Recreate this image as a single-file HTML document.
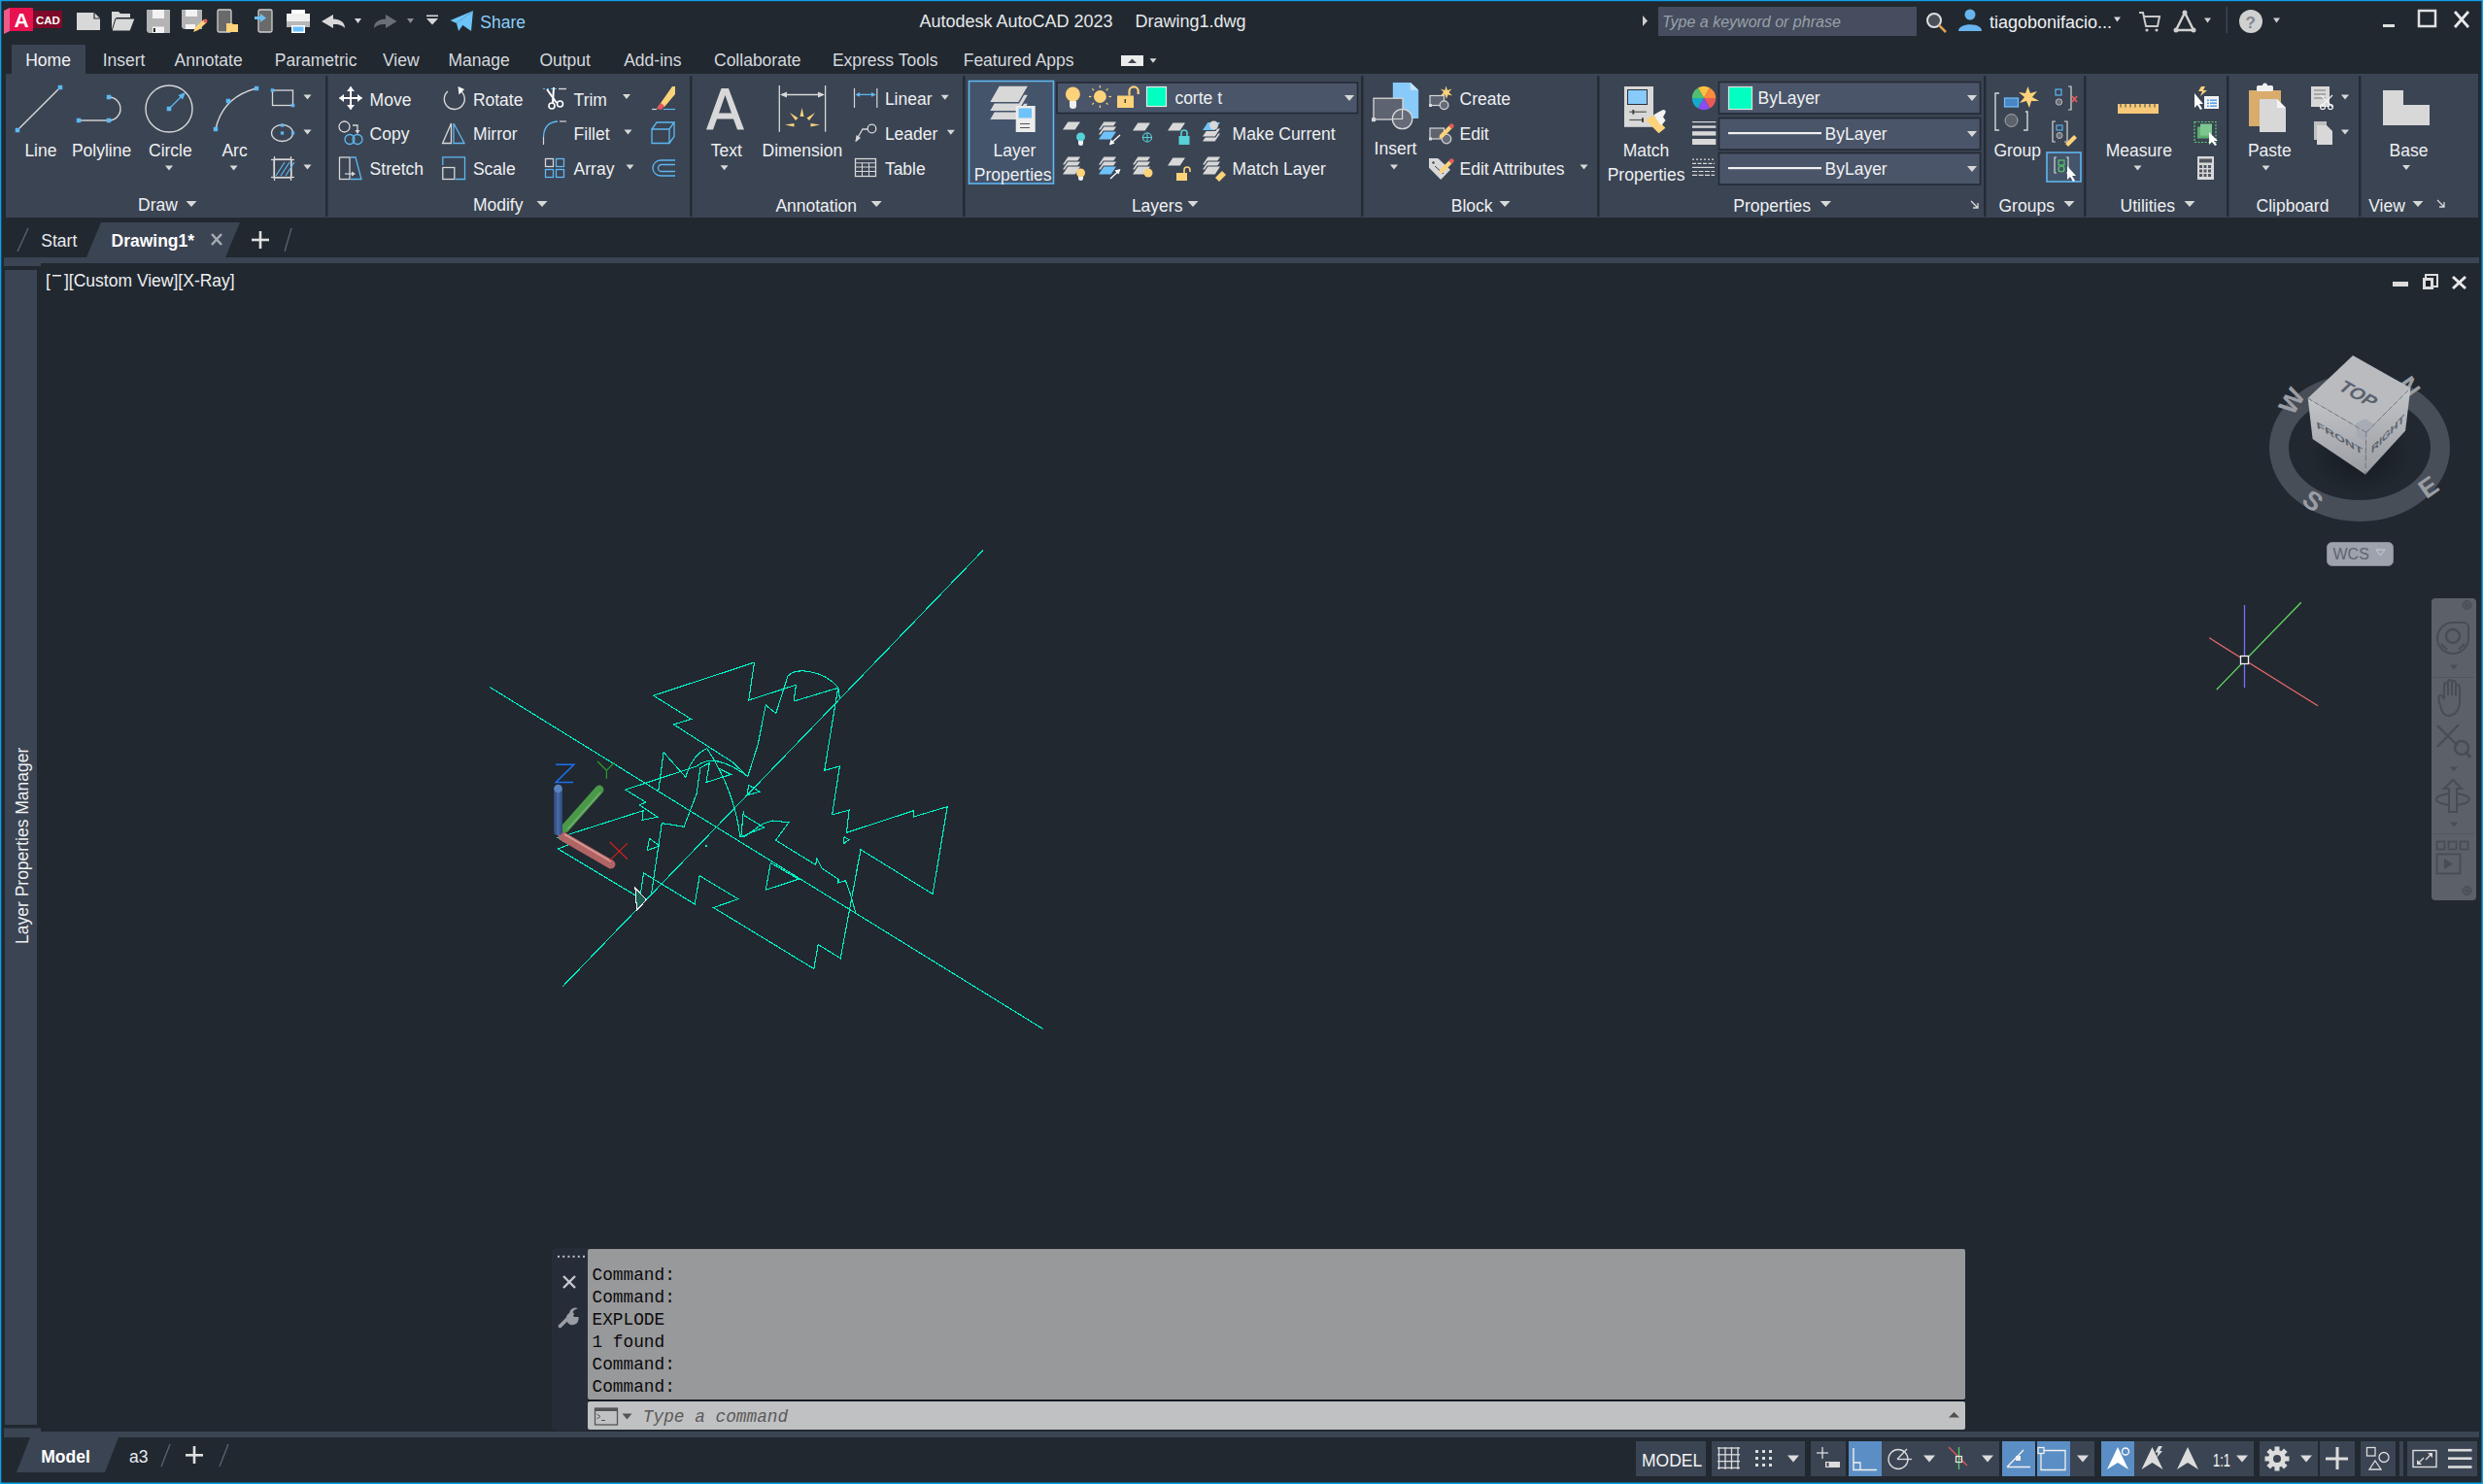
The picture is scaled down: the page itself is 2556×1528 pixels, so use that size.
<!DOCTYPE html>
<html><head><meta charset="utf-8"><style>
html,body{margin:0;padding:0;width:2556px;height:1528px;overflow:hidden;background:#212830;}
svg{position:absolute;left:0;top:0;display:block;}
text{font-family:"Liberation Sans",sans-serif;white-space:pre;}
</style></head><body>
<svg width="2556" height="1528" viewBox="0 0 2556 1528">
<rect x="0" y="0" width="2556" height="1528" fill="#212830" />
<rect x="0" y="0" width="2556" height="1.2" fill="#0ea0e8" />
<rect x="0" y="0" width="1.3" height="1528" fill="#0ea0e8" />
<rect x="2554.5" y="0" width="1.5" height="1528" fill="#0ea0e8" />
<rect x="0" y="1526.5" width="2556" height="1.5" fill="#0ea0e8" />
<polygon points="4,11 10,8 10,32 4,35" fill="#ee5a8a" />
<rect x="10" y="8" width="24" height="24" fill="#e8124f" />
<rect x="34" y="11" width="30" height="18" fill="#7d0a28" />
<text x="14.5" y="28" font-size="21" fill="#ffffff" font-weight="bold" >A</text>
<text x="37" y="25" font-size="11.5" fill="#ffffff" font-weight="bold" >CAD</text>
<text x="946.5" y="27.5" font-size="18" fill="#e6e8ea" >Autodesk AutoCAD 2023</text>
<text x="1168.5" y="27.5" font-size="18" fill="#e6e8ea" >Drawing1.dwg</text>
<polygon points="1691,16 1696,21.5 1691,27" fill="#d0d0d0" />
<rect x="1707" y="7" width="266" height="30" fill="#454d5e" />
<text x="1711" y="28" font-size="16" fill="#9aa0a8" font-style="italic" >Type a keyword or phrase</text>
<circle cx="1991" cy="21" r="7" fill="#4a5058" stroke="#e0e0e0" stroke-width="2" />
<line x1="1996" y1="26" x2="2003" y2="33" stroke="#e0a050" stroke-width="2.5" />
<circle cx="2028" cy="15" r="5.5" fill="#68b4ee" />
<path d="M2016,32 C2016,23 2040,23 2040,32 Z" fill="#68b4ee" />
<text x="2048" y="28.5" font-size="18" fill="#eef0f2" >tiagobonifacio...</text>
<polygon points="2176.0,17.5 2183.0,17.5 2179.5,22.5" fill="#d8d8d8" />
<polyline points="2202,13 2206,13 2209,27 2221,27 2223,17 2207,17" fill="none" stroke="#c8c8c8" stroke-width="2" />
<circle cx="2210" cy="31" r="1.6" fill="#c8c8c8" />
<circle cx="2220" cy="31" r="1.6" fill="#c8c8c8" />
<polygon points="2249,13 2240,31 2258,31" fill="none" stroke="#d0d0d0" stroke-width="2.5" stroke-linejoin="round"/>
<circle cx="2249" cy="13" r="2.5" fill="#d0d0d0" />
<circle cx="2240" cy="31" r="2.5" fill="#d0d0d0" />
<circle cx="2258" cy="31" r="2.5" fill="#d0d0d0" />
<polygon points="2269.0,18.5 2276.0,18.5 2272.5,23.5" fill="#d0d0d0" />
<rect x="2291.5" y="7" width="1.5" height="27" fill="#3b4453" />
<circle cx="2317" cy="22" r="12" fill="#d0d0d0" />
<text x="2311.5" y="29" font-size="17" fill="#808590" font-weight="bold" >?</text>
<polygon points="2340.0,18.5 2347.0,18.5 2343.5,23.5" fill="#d0d0d0" />
<rect x="2453" y="25" width="12" height="3" fill="#e0e0e0" />
<rect x="2490" y="11" width="17" height="16" fill="none" stroke="#e0e0e0" stroke-width="2.5"/>
<line x1="2527" y1="12" x2="2541" y2="28" stroke="#e8e8e8" stroke-width="2.8" />
<line x1="2541" y1="12" x2="2527" y2="28" stroke="#e8e8e8" stroke-width="2.8" />
<rect x="12" y="46" width="76" height="32" fill="#3b4453" />
<text x="26.2" y="68.2" font-size="17.5" fill="#f2f3f5" >Home</text>
<text x="105.7" y="68.2" font-size="17.5" fill="#d6d9de" >Insert</text>
<text x="179.6" y="68.2" font-size="17.5" fill="#d6d9de" >Annotate</text>
<text x="282.8" y="68.2" font-size="17.5" fill="#d6d9de" >Parametric</text>
<text x="394" y="68.2" font-size="17.5" fill="#d6d9de" >View</text>
<text x="461.5" y="68.2" font-size="17.5" fill="#d6d9de" >Manage</text>
<text x="555.4" y="68.2" font-size="17.5" fill="#d6d9de" >Output</text>
<text x="642.2" y="68.2" font-size="17.5" fill="#d6d9de" >Add-ins</text>
<text x="735" y="68.2" font-size="17.5" fill="#d6d9de" >Collaborate</text>
<text x="856.9" y="68.2" font-size="17.5" fill="#d6d9de" >Express Tools</text>
<text x="991.7" y="68.2" font-size="17.5" fill="#d6d9de" >Featured Apps</text>
<rect x="1154" y="57" width="23" height="11" fill="#ececec" />
<polygon points="1161,65 1170,65 1165.5,60.5" fill="#404650" />
<polygon points="1183.5,60.25 1190.5,60.25 1187,64.75" fill="#d8d8d8" />
<rect x="6" y="76" width="2545" height="148" fill="#3b4453" />
<rect x="335" y="78" width="2.5" height="145" fill="#252b35" />
<rect x="710" y="78" width="2.5" height="145" fill="#252b35" />
<rect x="991" y="78" width="2.5" height="145" fill="#252b35" />
<rect x="1401" y="78" width="2.5" height="145" fill="#252b35" />
<rect x="1644" y="78" width="2.5" height="145" fill="#252b35" />
<rect x="2042" y="78" width="2.5" height="145" fill="#252b35" />
<rect x="2145" y="78" width="2.5" height="145" fill="#252b35" />
<rect x="2292" y="78" width="2.5" height="145" fill="#252b35" />
<rect x="2428" y="78" width="2.5" height="145" fill="#252b35" />
<polygon points="104,229 247,229 232,265 89,265" fill="#3b4453" />
<line x1="29" y1="235" x2="18" y2="259" stroke="#5c6470" stroke-width="1.3" />
<text x="42.3" y="254" font-size="17.5" fill="#e8eaed" >Start</text>
<text x="114.5" y="254" font-size="17.5" fill="#ffffff" font-weight="bold" >Drawing1*</text>
<line x1="218" y1="241" x2="228" y2="252" stroke="#a8acb3" stroke-width="2.5" />
<line x1="228" y1="241" x2="218" y2="252" stroke="#a8acb3" stroke-width="2.5" />
<rect x="259" y="245.7" width="18" height="2.6" fill="#e0e0e0" />
<rect x="266.7" y="238" width="2.6" height="18" fill="#e0e0e0" />
<line x1="300" y1="235" x2="293" y2="259" stroke="#5c6470" stroke-width="1.3" />
<rect x="4" y="265" width="2548" height="6" fill="#3b4453" />
<rect x="4" y="271" width="38" height="3" fill="#3b4453" />
<text x="47" y="295" font-size="17.5" fill="#eef0f2" >[</text>
<rect x="54" y="283" width="9" height="1.5" fill="#eef0f2" />
<text x="66" y="295" font-size="17.5" fill="#eef0f2" >][Custom View][X-Ray]</text>
<rect x="2463" y="290" width="16" height="5" fill="#dcdcdc" />
<rect x="2497" y="283" width="12" height="12" fill="none" stroke="#dcdcdc" stroke-width="2"/>
<rect x="2494" y="286" width="11" height="12" fill="#dcdcdc" />
<rect x="2497" y="289" width="5" height="6" fill="#1a1f28" />
<line x1="2525" y1="285" x2="2538" y2="297" stroke="#e8e8e8" stroke-width="3" />
<line x1="2538" y1="285" x2="2525" y2="297" stroke="#e8e8e8" stroke-width="3" />
<rect x="5" y="278" width="33" height="1189" fill="#3b4453" />
<text x="0" y="0" font-size="17.5" fill="#eef0f2" transform="translate(28.8,972) rotate(-90)">Layer Properties Manager</text>
<rect x="4" y="1470.5" width="38" height="4" fill="#3b4453" />
<rect x="4" y="1474" width="2548" height="6" fill="#3b4453" />
<polygon points="31,1480 122,1480 108,1516 17,1516" fill="#3b4453" />
<text x="42.3" y="1505.7" font-size="17.5" fill="#ffffff" font-weight="bold" >Model</text>
<text x="133" y="1505.7" font-size="17.5" fill="#e8eaed" >a3</text>
<line x1="175" y1="1487" x2="166" y2="1510" stroke="#5c6470" stroke-width="1.3" />
<rect x="191" y="1497" width="18" height="2.6" fill="#e0e0e0" />
<rect x="198.7" y="1489" width="2.6" height="18" fill="#e0e0e0" />
<line x1="235" y1="1487" x2="226" y2="1510" stroke="#5c6470" stroke-width="1.3" />
<path d="M79,13 H97 L103,19 V31 H79 Z" fill="#d8d8d8" />
<path d="M97,13 V19 H103" fill="none" stroke="#2a2f38" stroke-width="1.2" />
<path d="M115,12 H122 L124,14 H134 V18 H120 L115,32 Z" fill="#d8d8d8" />
<polygon points="119,19 139,19 134,32 115,32" fill="#d8d8d8" stroke="#21272f" stroke-width="1"/>
<path d="M151,10 H175 V34 H153 L151,32 Z" fill="#b4b4b4" />
<rect x="157" y="10" width="12" height="9" fill="#f2f2f2" />
<rect x="157" y="27.5" width="12" height="6.5" fill="#f2f2f2" />
<rect x="158" y="29" width="1.8" height="4" fill="#111" />
<path d="M187,10 H208 V30 H189 L187,28 Z" fill="#b4b4b4" />
<rect x="191" y="10" width="12" height="7" fill="#f2f2f2" />
<rect x="191" y="25" width="10" height="5" fill="#f2f2f2" />
<path d="M199,33 L201,28 L210,20 L213,23 L204,31 Z" fill="#fcd27a" />
<circle cx="211.5" cy="21.5" r="2" fill="#e85a5a" />
<rect x="224" y="10" width="14" height="23" fill="#6a6a6a" rx="1.5" stroke="#d0d0d0" stroke-width="1.3"/>
<path d="M233,24 H239 L240,25 H245 V33 H233 Z" fill="#fcd27a" />
<rect x="266" y="10" width="14" height="23" fill="#6a6a6a" rx="1.5" stroke="#d0d0d0" stroke-width="1.3"/>
<path d="M262,17 H268 V14 L274,18.5 L268,23 V20 H262 Z" fill="#6cc0f8" />
<rect x="300" y="10" width="14" height="6" fill="#ffffff" />
<rect x="295" y="14" width="24" height="14" fill="#b8b8b8" />
<rect x="295" y="14" width="24" height="8" fill="#f0f0f0" />
<rect x="300" y="26" width="14" height="8" fill="#ffffff" />
<rect x="301.5" y="27.5" width="11" height="5" fill="#6cc0f8" />
<path d="M331,22 L343,15 V19.5 C350,19.5 355,23 355,29 C352,25.5 348,25 343,25 V29 Z" fill="#d8d8d8" />
<polygon points="365.0,19.0 372.0,19.0 368.5,24.0" fill="#d8d8d8" />
<path d="M408.5,22 L397,15 V19.5 C390,19.5 385,23 385,29 C388,25.5 392,25 397,25 V29 Z" fill="#6a6e76" />
<polygon points="419.0,19.0 426.0,19.0 422.5,24.0" fill="#8c8c8c" />
<rect x="439" y="15.5" width="12" height="1.6" fill="#d8d8d8" />
<polygon points="439,19 451,19 445,25.5" fill="#d8d8d8" />
<polygon points="463.5,21 487,11 470,24" fill="#6cc4f8" />
<polygon points="470,24 487,11 472,32" fill="#6cc4f8" />
<polygon points="475,25 487,11 485,32" fill="#6cc4f8" />
<text x="494.3" y="28.5" font-size="17.5" fill="#8ccff8" >Share</text>
<line x1="20" y1="132" x2="60" y2="92" stroke="#d8d8d8" stroke-width="1.4" />
<rect x="15.75" y="131.75" width="4.5" height="4.5" fill="#5cb8f2" />
<rect x="59.75" y="87.75" width="4.5" height="4.5" fill="#5cb8f2" />
<line x1="81" y1="124" x2="112" y2="124" stroke="#d8d8d8" stroke-width="1.4" />
<path d="M112,100 A12,12 0 0 1 112,124" fill="none" stroke="#d8d8d8" stroke-width="1.4" />
<rect x="78.75" y="121.75" width="4.5" height="4.5" fill="#5cb8f2" />
<rect x="109.75" y="121.75" width="4.5" height="4.5" fill="#5cb8f2" />
<rect x="109.75" y="97.75" width="4.5" height="4.5" fill="#5cb8f2" />
<circle cx="174" cy="112" r="24" fill="none" stroke="#d8d8d8" stroke-width="1.4" />
<line x1="174" y1="112" x2="188" y2="98" stroke="#5cb8f2" stroke-width="1.3" />
<polygon points="191,95 183.5,98 188,102.5" fill="#5cb8f2" />
<rect x="171.75" y="109.75" width="4.5" height="4.5" fill="#5cb8f2" />
<path d="M222,133 Q229,100 264,91" fill="none" stroke="#d8d8d8" stroke-width="1.4" />
<rect x="219.75" y="130.75" width="4.5" height="4.5" fill="#5cb8f2" />
<rect x="232.75" y="101.75" width="4.5" height="4.5" fill="#5cb8f2" />
<rect x="261.75" y="88.75" width="4.5" height="4.5" fill="#5cb8f2" />
<rect x="280.5" y="93" width="21" height="15.5" fill="none" stroke="#d8d8d8" stroke-width="1.3"/>
<rect x="278.75" y="91.25" width="3.5" height="3.5" fill="#5cb8f2" />
<rect x="299.75" y="106.75" width="3.5" height="3.5" fill="#5cb8f2" />
<polygon points="312.5,97.5 320.5,97.5 316.5,102.5" fill="#d8d8d8" />
<ellipse cx="290.5" cy="137" rx="11" ry="8.5" fill="none" stroke="#d8d8d8" stroke-width="1.3"/>
<rect x="288.85" y="135.35" width="3.3" height="3.3" fill="#5cb8f2" />
<rect x="288.85" y="127.35" width="3.3" height="3.3" fill="#5cb8f2" />
<rect x="299.85" y="135.35" width="3.3" height="3.3" fill="#5cb8f2" />
<polygon points="312.5,133.5 320.5,133.5 316.5,138.5" fill="#d8d8d8" />
<rect x="282" y="164" width="18" height="19" fill="none" stroke="#d8d8d8" stroke-width="1.3"/>
<line x1="279" y1="164.5" x2="303" y2="164.5" stroke="#d8d8d8" stroke-width="1.2" />
<line x1="279" y1="182.5" x2="303" y2="182.5" stroke="#d8d8d8" stroke-width="1.2" />
<line x1="282.5" y1="161" x2="282.5" y2="186" stroke="#d8d8d8" stroke-width="1.2" />
<line x1="299.5" y1="161" x2="299.5" y2="186" stroke="#d8d8d8" stroke-width="1.2" />
<line x1="284" y1="181" x2="293" y2="167" stroke="#5cb8f2" stroke-width="1.2" />
<line x1="289" y1="181" x2="298" y2="167" stroke="#5cb8f2" stroke-width="1.2" />
<line x1="294" y1="181" x2="303" y2="167" stroke="#5cb8f2" stroke-width="1.2" />
<polygon points="312.5,169.5 320.5,169.5 316.5,174.5" fill="#d8d8d8" />
<text x="25.4" y="161.3" font-size="17.5" fill="#eef0f2" >Line</text>
<text x="73.9" y="161.3" font-size="17.5" fill="#eef0f2" >Polyline</text>
<text x="153" y="161.3" font-size="17.5" fill="#eef0f2" >Circle</text>
<text x="228.4" y="161.3" font-size="17.5" fill="#eef0f2" >Arc</text>
<polygon points="170.0,170.5 178.0,170.5 174,175.5" fill="#d8d8d8" />
<polygon points="236.6,170.5 244.6,170.5 240.6,175.5" fill="#d8d8d8" />
<text x="142" y="217" font-size="17.5" fill="#eef0f2" >Draw</text>
<polygon points="191.5,207.0 202.5,207.0 197,213.0" fill="#d8d8d8" />
<line x1="349.5" y1="101" x2="372.5" y2="101" stroke="#ffffff" stroke-width="2" />
<line x1="361" y1="89.5" x2="361" y2="112.5" stroke="#ffffff" stroke-width="2" />
<polygon points="349,101 354,97 354,105" fill="#fff" />
<polygon points="373,101 368,97 368,105" fill="#fff" />
<polygon points="361,89 357,94 365,94" fill="#fff" />
<polygon points="361,113 357,108 365,108" fill="#fff" />
<text x="380.6" y="108.5" font-size="17.5" fill="#eef0f2" >Move</text>
<path d="M474,93.5 A10.5,10.5 0 1 1 461,94" fill="none" stroke="#d8d8d8" stroke-width="1.4" />
<polygon points="471.5,89 478,92 472.5,97.5" fill="#fff" />
<text x="486.9" y="108.5" font-size="17.5" fill="#eef0f2" >Rotate</text>
<line x1="559" y1="91.5" x2="583" y2="91.5" stroke="#5cb8f2" stroke-width="1.2" stroke-dasharray="2,2"/>
<rect x="575" y="90.8" width="8" height="1.4" fill="#d8d8d8" />
<line x1="563" y1="92" x2="573" y2="106" stroke="#fff" stroke-width="2" />
<line x1="570" y1="90" x2="569" y2="106" stroke="#fff" stroke-width="2" />
<circle cx="568" cy="109" r="3" fill="none" stroke="#fff" stroke-width="1.6" />
<circle cx="576.5" cy="107" r="3" fill="none" stroke="#fff" stroke-width="1.6" />
<text x="590.6" y="108.5" font-size="17.5" fill="#eef0f2" >Trim</text>
<polygon points="641.0,97.0 649.0,97.0 645,102.0" fill="#d8d8d8" />
<path d="M676,112 L692,89 L695,89 L695,97 L684,110 Z" fill="#fcd27a" />
<path d="M676,112 L680,106 L684,109 L681,113 Z" fill="#e8545a" />
<line x1="671" y1="112.5" x2="676" y2="112.5" stroke="#d8d8d8" stroke-width="1.2" />
<line x1="683" y1="112.5" x2="695" y2="112.5" stroke="#5cb8f2" stroke-width="1.2" />
<circle cx="354.5" cy="130.5" r="5.5" fill="none" stroke="#d8d8d8" stroke-width="1.3" />
<path d="M363,129 H368 V135" fill="none" stroke="#d8d8d8" stroke-width="1.3" />
<polygon points="365.5,134 370.5,134 368,138" fill="#d8d8d8" />
<circle cx="360" cy="143.5" r="5" fill="none" stroke="#5cb8f2" stroke-width="1.3" />
<circle cx="368" cy="143.5" r="5" fill="none" stroke="#5cb8f2" stroke-width="1.3" />
<text x="380.6" y="144.3" font-size="17.5" fill="#eef0f2" >Copy</text>
<polygon points="455.6,147.5 464.5,127 464.5,147.5" fill="none" stroke="#d8d8d8" stroke-width="1.3"/>
<polygon points="467,127 478,147.5 467,147.5" fill="none" stroke="#5cb8f2" stroke-width="1.3"/>
<text x="486.9" y="144.3" font-size="17.5" fill="#eef0f2" >Mirror</text>
<line x1="559.5" y1="141" x2="559.5" y2="149" stroke="#d8d8d8" stroke-width="1.2" />
<path d="M559.5,141 Q560,126 574,125" fill="none" stroke="#5cb8f2" stroke-width="1.3" />
<line x1="576" y1="125" x2="583" y2="125" stroke="#d8d8d8" stroke-width="1.2" />
<text x="590.6" y="144.3" font-size="17.5" fill="#eef0f2" >Fillet</text>
<polygon points="642.5,133.5 650.5,133.5 646.5,138.5" fill="#d8d8d8" />
<path d="M671,133 H689 V147.5 H671 Z M671,133 L676,126 H694 L689,133 M694,126 V140.5 L689,147.5" fill="none" stroke="#5cb8f2" stroke-width="1.3" />
<rect x="349.5" y="162" width="10.5" height="22.5" fill="none" stroke="#d8d8d8" stroke-width="1.3"/>
<path d="M361,162 H366 L372,184.5 H361" fill="none" stroke="#5cb8f2" stroke-width="1.3" />
<line x1="355" y1="179" x2="364" y2="179" stroke="#d8d8d8" stroke-width="1.2" />
<polygon points="366,179 362,176.5 362,181.5" fill="#d8d8d8" />
<text x="380.6" y="179.9" font-size="17.5" fill="#eef0f2" >Stretch</text>
<path d="M455.8,170 V161.8 H478.5 V184.5 H469" fill="none" stroke="#5cb8f2" stroke-width="1.3" />
<rect x="455.8" y="172.5" width="12" height="12" fill="none" stroke="#d8d8d8" stroke-width="1.3"/>
<text x="486.9" y="179.9" font-size="17.5" fill="#eef0f2" >Scale</text>
<rect x="561.5" y="163.5" width="8" height="8" fill="none" stroke="#d8d8d8" stroke-width="1.3"/>
<rect x="572.5" y="163.5" width="8" height="8" fill="none" stroke="#5cb8f2" stroke-width="1.3"/>
<rect x="561.5" y="174.5" width="8" height="8" fill="none" stroke="#5cb8f2" stroke-width="1.3"/>
<rect x="572.5" y="174.5" width="8" height="8" fill="none" stroke="#5cb8f2" stroke-width="1.3"/>
<text x="590.6" y="179.9" font-size="17.5" fill="#eef0f2" >Array</text>
<polygon points="644.5,169.5 652.5,169.5 648.5,174.5" fill="#d8d8d8" />
<path d="M695,165 H680 A8,8 0 0 0 680,181 H695" fill="none" stroke="#5cb8f2" stroke-width="1.3" />
<path d="M695,169.5 H681 A3.5,3.5 0 0 0 681,176.5 H695" fill="none" stroke="#5cb8f2" stroke-width="1.3" />
<text x="486.9" y="217" font-size="17.5" fill="#eef0f2" >Modify</text>
<polygon points="552.5,207.0 563.5,207.0 558,213.0" fill="#d8d8d8" />
<path d="M727,133.5 L742.5,91 H750 L766,133.5 H759 L755,122.5 H738 L734,133.5 Z M740,116.5 H753 L746.5,98 Z" fill="#d8d8d8" />
<text x="731.7" y="160.6" font-size="17.5" fill="#eef0f2" >Text</text>
<polygon points="741.6,170.3 749.6,170.3 745.6,175.3" fill="#d8d8d8" />
<line x1="802.3" y1="88" x2="802.3" y2="135.7" stroke="#d8d8d8" stroke-width="1.3" />
<line x1="849.6" y1="88" x2="849.6" y2="135.7" stroke="#d8d8d8" stroke-width="1.3" />
<line x1="805" y1="97.5" x2="847" y2="97.5" stroke="#d8d8d8" stroke-width="1.3" />
<polygon points="803,97.5 810,94.5 810,100.5" fill="#d8d8d8" />
<polygon points="849,97.5 842,94.5 842,100.5" fill="#d8d8d8" />
<polygon points="825.5,111 823.5,120 827.5,120" fill="#fcd27a" />
<polygon points="813,116 819,124 821.5,121.5" fill="#fcd27a" />
<polygon points="839,116 833,124 830.5,121.5" fill="#fcd27a" />
<polygon points="808,128.5 817.5,127 817.5,130.5" fill="#fcd27a" />
<polygon points="844,128.5 834.5,127 834.5,130.5" fill="#fcd27a" />
<text x="784.5" y="160.6" font-size="17.5" fill="#eef0f2" >Dimension</text>
<line x1="879.5" y1="91" x2="879.5" y2="111" stroke="#d8d8d8" stroke-width="1.2" />
<line x1="902.8" y1="91" x2="902.8" y2="111" stroke="#d8d8d8" stroke-width="1.2" />
<line x1="882" y1="97.4" x2="900" y2="97.4" stroke="#5cb8f2" stroke-width="1.3" />
<polygon points="880.5,97.4 885,95 885,99.8" fill="#5cb8f2" />
<polygon points="901.8,97.4 897,95 897,99.8" fill="#5cb8f2" />
<text x="910.9" y="107.8" font-size="17.5" fill="#eef0f2" >Linear</text>
<polygon points="968.7,97.8 976.7,97.8 972.7,102.8" fill="#d8d8d8" />
<path d="M881,145 L888,133 H893" fill="none" stroke="#d8d8d8" stroke-width="1.3" />
<circle cx="897.5" cy="132.5" r="4.3" fill="none" stroke="#d8d8d8" stroke-width="1.3" />
<polygon points="880.5,146.5 881.5,139 886,142" fill="#d8d8d8" />
<text x="910.9" y="143.6" font-size="17.5" fill="#eef0f2" >Leader</text>
<polygon points="974.8,133.8 982.8,133.8 978.8,138.8" fill="#d8d8d8" />
<rect x="880.5" y="163.5" width="21" height="18" fill="none" stroke="#d8d8d8" stroke-width="1.3"/>
<line x1="880.5" y1="167.8" x2="901.5" y2="167.8" stroke="#d8d8d8" stroke-width="1" />
<line x1="880.5" y1="172" x2="901.5" y2="172" stroke="#d8d8d8" stroke-width="1" />
<line x1="880.5" y1="176.5" x2="901.5" y2="176.5" stroke="#d8d8d8" stroke-width="1" />
<line x1="887.5" y1="167.8" x2="887.5" y2="181.5" stroke="#d8d8d8" stroke-width="1" />
<line x1="894.5" y1="167.8" x2="894.5" y2="181.5" stroke="#d8d8d8" stroke-width="1" />
<text x="910.9" y="179.7" font-size="17.5" fill="#eef0f2" >Table</text>
<text x="798.4" y="218" font-size="17.5" fill="#eef0f2" >Annotation</text>
<polygon points="896.7,207.0 907.7,207.0 902.2,213.0" fill="#d8d8d8" />
<rect x="997.5" y="83.5" width="87" height="105.5" fill="#44546a" stroke="#5fb6f0" stroke-width="1.6"/>
<polygon points="1018,123.8 1028.3,106 1059,106 1048.7,123.8" fill="#d8d8d8" stroke="#44546a" stroke-width="1.4"/>
<polygon points="1018,114.8 1028.3,97 1059,97 1048.7,114.8" fill="#d8d8d8" stroke="#44546a" stroke-width="1.4"/>
<polygon points="1018,105.8 1028.3,88 1059,88 1048.7,105.8" fill="#d8d8d8" stroke="#44546a" stroke-width="1.4"/>
<rect x="1045.7" y="109" width="20" height="27" fill="#ececec" />
<rect x="1048.5" y="111.5" width="13.5" height="10" fill="#6ec2fa" />
<line x1="1050" y1="127.5" x2="1060" y2="127.5" stroke="#555" stroke-width="1" />
<line x1="1050" y1="131.5" x2="1060" y2="131.5" stroke="#555" stroke-width="1" />
<text x="1022.5" y="160.9" font-size="17.5" fill="#eef0f2" >Layer</text>
<text x="1002.8" y="185.6" font-size="17.5" fill="#eef0f2" >Properties</text>
<rect x="1088" y="85" width="309.5" height="31.5" fill="#4a5569" stroke="#242a34" stroke-width="1.6"/>
<circle cx="1104.4" cy="97" r="7.5" fill="#fcd27a" />
<path d="M1101,104 H1108 V109 A3.5,3 0 0 1 1101,109 Z" fill="#f0f0f0" />
<circle cx="1132.4" cy="99.5" r="6.5" fill="#fcd27a" />
<line x1="1141.4" y1="99.5" x2="1143.9" y2="99.5" stroke="#fcd27a" stroke-width="1.3"/>
<line x1="1138.8" y1="105.9" x2="1140.5" y2="107.6" stroke="#fcd27a" stroke-width="1.3"/>
<line x1="1132.4" y1="108.5" x2="1132.4" y2="111.0" stroke="#fcd27a" stroke-width="1.3"/>
<line x1="1126.0" y1="105.9" x2="1124.3" y2="107.6" stroke="#fcd27a" stroke-width="1.3"/>
<line x1="1123.4" y1="99.5" x2="1120.9" y2="99.5" stroke="#fcd27a" stroke-width="1.3"/>
<line x1="1126.0" y1="93.1" x2="1124.3" y2="91.4" stroke="#fcd27a" stroke-width="1.3"/>
<line x1="1132.4" y1="90.5" x2="1132.4" y2="88.0" stroke="#fcd27a" stroke-width="1.3"/>
<line x1="1138.8" y1="93.1" x2="1140.5" y2="91.4" stroke="#fcd27a" stroke-width="1.3"/>
<rect x="1150" y="98.5" width="17" height="12.5" fill="#fcd27a" />
<path d="M1162.5,98.5 V94 A4.6,4.6 0 0 1 1171.7,94 V97" fill="none" stroke="#fcd27a" stroke-width="2.2" />
<rect x="1157.5" y="102" width="1.5" height="4" fill="#3b4453" />
<rect x="1180.5" y="89.5" width="20" height="20" fill="#00ffc0" stroke="#e8e8e8" stroke-width="1.2"/>
<text x="1209.4" y="107.2" font-size="17.5" fill="#eef0f2" >corte t</text>
<polygon points="1384.0,98.0 1394.0,98.0 1389,104.0" fill="#d8d8d8" />
<polygon points="1093,134 1099,125 1113,125 1107,134" fill="#d8d8d8" stroke="#3b4453" stroke-width="1.2"/>
<circle cx="1112.5" cy="141" r="4.5" fill="#58d0d8" />
<path d="M1110,145 H1115 V148 A2.5,2 0 0 1 1110,148 Z" fill="#f0f0f0" />
<polygon points="1130,134 1136,125 1150,125 1144,134" fill="#d8d8d8" stroke="#3b4453" stroke-width="1.2"/>
<polygon points="1130,139 1136,130 1150,130 1144,139" fill="#d8d8d8" stroke="#3b4453" stroke-width="1.2"/>
<polygon points="1130,144 1136,135 1150,135 1144,144" fill="#6ec2fa" stroke="#3b4453" stroke-width="1.2"/>
<line x1="1153" y1="139" x2="1143" y2="148" stroke="#fff" stroke-width="1.3" />
<polygon points="1142,149.5 1143.5,143.5 1147.5,147.5" fill="#fff" />
<polygon points="1165,135 1171,126 1185,126 1179,135" fill="#d8d8d8" stroke="#3b4453" stroke-width="1.2"/>
<circle cx="1181" cy="141.5" r="4.5" fill="none" stroke="#58d0d8" stroke-width="1.2" />
<line x1="1176" y1="141.5" x2="1186" y2="141.5" stroke="#58d0d8" stroke-width="1" />
<line x1="1181" y1="136.5" x2="1181" y2="146.5" stroke="#58d0d8" stroke-width="1" />
<polygon points="1201,135 1207,126 1221,126 1215,135" fill="#d8d8d8" stroke="#3b4453" stroke-width="1.2"/>
<rect x="1213.5" y="140" width="11" height="9" fill="#58d0d8" />
<path d="M1216,140 V137 A3,3 0 0 1 1222,137 V140" fill="none" stroke="#58d0d8" stroke-width="1.6" />
<polygon points="1237,146 1243,137 1257,137 1251,146" fill="#d8d8d8" stroke="#3b4453" stroke-width="1.2"/>
<polygon points="1237,141 1243,132 1257,132 1251,141" fill="#d8d8d8" stroke="#3b4453" stroke-width="1.2"/>
<polygon points="1237,134.5 1243,125.5 1257,125.5 1251,134.5" fill="#6ec2fa" stroke="#3b4453" stroke-width="1.2"/>
<circle cx="1249.5" cy="129" r="4.5" fill="#d8d8d8" />
<text x="1268.6" y="144.1" font-size="17.5" fill="#eef0f2" >Make Current</text>
<polygon points="1093,170 1099,161 1113,161 1107,170" fill="#d8d8d8" stroke="#3b4453" stroke-width="1.2"/>
<polygon points="1093,175 1099,166 1113,166 1107,175" fill="#d8d8d8" stroke="#3b4453" stroke-width="1.2"/>
<polygon points="1093,180 1099,171 1113,171 1107,180" fill="#d8d8d8" stroke="#3b4453" stroke-width="1.2"/>
<circle cx="1112.5" cy="178" r="4.5" fill="#fcd27a" />
<path d="M1110,182 H1115 V184 A2.5,2 0 0 1 1110,184 Z" fill="#f0f0f0" />
<polygon points="1130,170 1136,161 1150,161 1144,170" fill="#d8d8d8" stroke="#3b4453" stroke-width="1.2"/>
<polygon points="1130,175 1136,166 1150,166 1144,175" fill="#d8d8d8" stroke="#3b4453" stroke-width="1.2"/>
<polygon points="1130,180 1136,171 1150,171 1144,180" fill="#6ec2fa" stroke="#3b4453" stroke-width="1.2"/>
<line x1="1143" y1="184" x2="1152.5" y2="175" stroke="#fff" stroke-width="1.3" />
<polygon points="1153.5,174 1147.5,175.5 1151.5,179.5" fill="#fff" />
<polygon points="1165,170 1171,161 1185,161 1179,170" fill="#d8d8d8" stroke="#3b4453" stroke-width="1.2"/>
<polygon points="1165,175 1171,166 1185,166 1179,175" fill="#d8d8d8" stroke="#3b4453" stroke-width="1.2"/>
<polygon points="1165,180 1171,171 1185,171 1179,180" fill="#d8d8d8" stroke="#3b4453" stroke-width="1.2"/>
<circle cx="1182" cy="178" r="4.5" fill="#fcd27a" />
<polygon points="1201,171 1207,162 1221,162 1215,171" fill="#d8d8d8" stroke="#3b4453" stroke-width="1.2"/>
<rect x="1211" y="178" width="11" height="8" fill="#fcd27a" />
<path d="M1219,178 V175 A3,3 0 0 1 1225,175 V177" fill="none" stroke="#fcd27a" stroke-width="1.6" />
<polygon points="1237,170 1243,161 1257,161 1251,170" fill="#d8d8d8" stroke="#3b4453" stroke-width="1.2"/>
<polygon points="1237,175 1243,166 1257,166 1251,175" fill="#d8d8d8" stroke="#3b4453" stroke-width="1.2"/>
<polygon points="1237,180 1243,171 1257,171 1251,180" fill="#d8d8d8" stroke="#3b4453" stroke-width="1.2"/>
<path d="M1251,183 L1258,176 L1262,180 L1255,187 Z" fill="#fcd27a" />
<text x="1268.6" y="179.8" font-size="17.5" fill="#eef0f2" >Match Layer</text>
<text x="1164.9" y="217.7" font-size="17.5" fill="#eef0f2" >Layers</text>
<polygon points="1222.5,207.0 1233.5,207.0 1228,213.0" fill="#d8d8d8" />
<path d="M1433.8,84.9 H1451.9 L1460.2,92.7 V122 H1433.8 Z" fill="#88cafa" />
<polygon points="1451.9,84.9 1451.9,92.7 1460.2,92.7" fill="#c4e4fc" />
<rect x="1414" y="101.2" width="30" height="21.8" fill="#5d6370" stroke="#d8d8d8" stroke-width="1.3"/>
<circle cx="1443.6" cy="122.5" r="10.2" fill="#656b78" stroke="#d8d8d8" stroke-width="1.3" />
<path d="M1433.4,122.5 H1443.6 V112.3" fill="none" stroke="#d8d8d8" stroke-width="1.2" />
<rect x="1412" y="121.2" width="4" height="4" fill="#d8d8d8" />
<text x="1414.6" y="158.9" font-size="17.5" fill="#eef0f2" >Insert</text>
<polygon points="1431.0,169.5 1439.0,169.5 1435,174.5" fill="#d8d8d8" />
<rect x="1472" y="98.5" width="14.5" height="10" fill="#5d6370" stroke="#d8d8d8" stroke-width="1.2"/>
<circle cx="1486.6" cy="108.3" r="4.4" fill="#656b78" stroke="#d8d8d8" stroke-width="1.2" />
<rect x="1471" y="107" width="3" height="3" fill="#d8d8d8" />
<polygon points="1488.6,88.5 1490,93 1494.5,91.5 1491.5,95 1495,98.5 1490.5,97.5 1489,102 1487.5,97.5 1483,98.5 1486,95 1483,91.5 1487.3,93" fill="#fcd27a" />
<text x="1502.5" y="107.9" font-size="17.5" fill="#eef0f2" >Create</text>
<rect x="1472" y="132" width="14.5" height="11" fill="#5d6370" stroke="#d8d8d8" stroke-width="1.2"/>
<circle cx="1489" cy="143" r="4.8" fill="#656b78" stroke="#d8d8d8" stroke-width="1.2" />
<rect x="1471" y="141.5" width="3" height="3" fill="#d8d8d8" />
<path d="M1482,139 L1491.5,129.5 L1494.5,132.5 L1485,142 L1481.5,142.5 Z" fill="#fcd27a" />
<path d="M1491.5,129.5 L1492.5,128 A2,2 0 0 1 1496,131.5 L1494.5,132.5 Z" fill="#e85a5a" />
<text x="1502.5" y="144.1" font-size="17.5" fill="#eef0f2" >Edit</text>
<polygon points="1471,163.1 1480.2,163.1 1493,174.8 1483.2,185 1471,172.8" fill="#d8d8d8" />
<circle cx="1475.5" cy="167.5" r="1.2" fill="#3b4453" />
<line x1="1477" y1="171" x2="1486" y2="179" stroke="#3b4453" stroke-width="1" />
<path d="M1482,175 L1491.5,165.5 L1494.5,168.5 L1485,178 L1481.5,178.5 Z" fill="#fcd27a" />
<path d="M1491.5,165.5 L1492.5,164 A2,2 0 0 1 1496,167.5 L1494.5,168.5 Z" fill="#e85a5a" />
<text x="1502.5" y="179.8" font-size="17.5" fill="#eef0f2" >Edit Attributes</text>
<polygon points="1626.5,169.5 1634.5,169.5 1630.5,174.5" fill="#d8d8d8" />
<text x="1493.8" y="217.7" font-size="17.5" fill="#eef0f2" >Block</text>
<polygon points="1543.5,207.0 1554.5,207.0 1549,213.0" fill="#d8d8d8" />
<rect x="1672" y="89" width="30" height="41.8" fill="#d8d8d8" />
<rect x="1675.5" y="92.5" width="20" height="15" fill="#88cafa" stroke="#2a2f38" stroke-width="1"/>
<line x1="1677.3" y1="115.2" x2="1694.8" y2="115.2" stroke="#555" stroke-width="1.2" />
<rect x="1680.3" y="113" width="2" height="4.6" fill="#444" />
<line x1="1677.3" y1="123.5" x2="1692" y2="123.5" stroke="#555" stroke-width="1.2" />
<rect x="1690" y="121.3" width="2" height="4.6" fill="#444" />
<polygon points="1693.9,123.5 1701.7,118.6 1714.4,131.8 1707.5,137.2" fill="#fcd27a" />
<path d="M1702,118.5 L1707,115.5 L1711.5,113.2 A2.2,2.2 0 0 1 1714.5,116 L1712,120.5 L1714.5,124 L1710,129.5 Z" fill="#f2f2f2" />
<text x="1670.7" y="160.9" font-size="17.5" fill="#eef0f2" >Match</text>
<text x="1654.7" y="185.6" font-size="17.5" fill="#eef0f2" >Properties</text>
<path d="M1754,101 L1747.90,90.43 A12.2,12.2 0 0 1 1760.10,90.43 Z" fill="#fcc040"/>
<path d="M1754,101 L1760.10,90.43 A12.2,12.2 0 0 1 1766.20,101.00 Z" fill="#fb8c3c"/>
<path d="M1754,101 L1766.20,101.00 A12.2,12.2 0 0 1 1760.10,111.57 Z" fill="#e85a5a"/>
<path d="M1754,101 L1760.10,111.57 A12.2,12.2 0 0 1 1747.90,111.57 Z" fill="#8a4cf0"/>
<path d="M1754,101 L1747.90,111.57 A12.2,12.2 0 0 1 1741.80,101.00 Z" fill="#18a8c8"/>
<path d="M1754,101 L1741.80,101.00 A12.2,12.2 0 0 1 1747.90,90.43 Z" fill="#50c070"/>
<rect x="1742" y="125" width="24.3" height="1.2" fill="#d8d8d8" />
<rect x="1742" y="129.4" width="24.3" height="2.4" fill="#d8d8d8" />
<rect x="1742" y="135.2" width="24.3" height="4.4" fill="#d8d8d8" />
<rect x="1742" y="143" width="24.3" height="6" fill="#d8d8d8" />
<line x1="1742" y1="164.2" x2="1765" y2="164.2" stroke="#d8d8d8" stroke-width="1.2" stroke-dasharray="2,2"/>
<line x1="1742" y1="168.4" x2="1765" y2="168.4" stroke="#d8d8d8" stroke-width="1.2" stroke-dasharray="4,1.5"/>
<line x1="1742" y1="172.4" x2="1765" y2="172.4" stroke="#d8d8d8" stroke-width="1.2" stroke-dasharray="24"/>
<line x1="1742" y1="176.5" x2="1765" y2="176.5" stroke="#d8d8d8" stroke-width="1.2" stroke-dasharray="5,1.5"/>
<line x1="1742" y1="180.4" x2="1765" y2="180.4" stroke="#d8d8d8" stroke-width="1.2" stroke-dasharray="5,1.5"/>
<rect x="1769.5" y="84.5" width="269" height="32.5" fill="#4a5569" stroke="#242a34" stroke-width="1.6"/>
<polygon points="2025.0,98.0 2035.0,98.0 2030,104.0" fill="#d8d8d8" />
<rect x="1769.5" y="121.5" width="269" height="32.5" fill="#4a5569" stroke="#242a34" stroke-width="1.6"/>
<polygon points="2025.0,135.0 2035.0,135.0 2030,141.0" fill="#d8d8d8" />
<rect x="1769.5" y="157.5" width="269" height="32.5" fill="#4a5569" stroke="#242a34" stroke-width="1.6"/>
<polygon points="2025.0,171.0 2035.0,171.0 2030,177.0" fill="#d8d8d8" />
<rect x="1779.5" y="89.5" width="24" height="23" fill="#00ffc0" stroke="#e0e0e0" stroke-width="1.2"/>
<text x="1809.5" y="107.3" font-size="17.5" fill="#eef0f2" >ByLayer</text>
<rect x="1779" y="136" width="96" height="2.2" fill="#f0f0f0" />
<text x="1878.5" y="144.1" font-size="17.5" fill="#eef0f2" >ByLayer</text>
<rect x="1779" y="172" width="96" height="2.2" fill="#f0f0f0" />
<text x="1878.5" y="179.8" font-size="17.5" fill="#eef0f2" >ByLayer</text>
<text x="1784.3" y="217.7" font-size="17.5" fill="#eef0f2" >Properties</text>
<polygon points="1874.0,207.0 1885.0,207.0 1879.5,213.0" fill="#d8d8d8" />
<path d="M2029,207 L2036,214 M2036,209 V214 H2031" fill="none" stroke="#d8d8d8" stroke-width="1.3" />
<path d="M2058,96 H2054 V134 H2058 M2085,115 H2087 V134 H2083" fill="none" stroke="#d8d8d8" stroke-width="1.4" />
<rect x="2063.5" y="101" width="14" height="9" fill="#4a86c6" stroke="#6ec2fa" stroke-width="1.2"/>
<circle cx="2070.5" cy="124" r="6.5" fill="#5d636c" stroke="#aaa" stroke-width="1" />
<polygon points="2087.5,89 2090,96 2097,94 2092,100 2099,104 2091,104 2089,111 2086,104 2079,106 2084,100 2078,95 2085,96" fill="#fcd27a" />
<text x="2052.4" y="161" font-size="17.5" fill="#eef0f2" >Group</text>
<text x="2057.5" y="217.6" font-size="17.5" fill="#eef0f2" >Groups</text>
<polygon points="2124.5,207.0 2135.5,207.0 2130,213.0" fill="#d8d8d8" />
<rect x="2116" y="92" width="6" height="6" fill="none" stroke="#5cb8f2" stroke-width="1.2"/>
<circle cx="2119.5" cy="105" r="3.2" fill="#6a6e76" stroke="#bbb" stroke-width="1" />
<path d="M2129,89 H2132 V113 H2129" fill="none" stroke="#d8d8d8" stroke-width="1.2" />
<line x1="2133" y1="99" x2="2138" y2="105" stroke="#e85a5a" stroke-width="1.8" />
<line x1="2138" y1="99" x2="2133" y2="105" stroke="#e85a5a" stroke-width="1.8" />
<path d="M2116,125 H2113 V146 H2116 M2125,125 H2128 V146 H2125" fill="none" stroke="#d8d8d8" stroke-width="1.2" />
<rect x="2117" y="129" width="6" height="5" fill="none" stroke="#5cb8f2" stroke-width="1.1"/>
<circle cx="2120" cy="139.5" r="3" fill="#6a6e76" stroke="#bbb" stroke-width="1" />
<path d="M2126,148 L2135,139 L2138,142 L2129,151 Z" fill="#fcd27a" />
<rect x="2107" y="157" width="35" height="30" fill="#44546a" stroke="#5fb6f0" stroke-width="1.6"/>
<path d="M2117,162 H2115 V178 H2117 M2127,162 H2129 V178 H2127" fill="none" stroke="#d8d8d8" stroke-width="1.2" />
<rect x="2119" y="165" width="6" height="5" fill="none" stroke="#5ccd6a" stroke-width="1.1"/>
<circle cx="2122" cy="174" r="3" fill="none" stroke="#5ccd6a" stroke-width="1.2" />
<polygon points="2128,171 2128,185 2131,182 2134,187 2136,186 2133,181 2137,181" fill="#fff" />
<rect x="2180" y="107" width="42" height="10" fill="#f6c877" />
<line x1="2183" y1="107" x2="2183" y2="110.5" stroke="#3b4453" stroke-width="1" />
<line x1="2188" y1="107" x2="2188" y2="110.5" stroke="#3b4453" stroke-width="1" />
<line x1="2193" y1="107" x2="2193" y2="110.5" stroke="#3b4453" stroke-width="1" />
<line x1="2198" y1="107" x2="2198" y2="110.5" stroke="#3b4453" stroke-width="1" />
<line x1="2203" y1="107" x2="2203" y2="110.5" stroke="#3b4453" stroke-width="1" />
<line x1="2208" y1="107" x2="2208" y2="110.5" stroke="#3b4453" stroke-width="1" />
<line x1="2213" y1="107" x2="2213" y2="110.5" stroke="#3b4453" stroke-width="1" />
<line x1="2218" y1="107" x2="2218" y2="110.5" stroke="#3b4453" stroke-width="1" />
<text x="2167.8" y="161" font-size="17.5" fill="#eef0f2" >Measure</text>
<polygon points="2196.5,170.5 2204.5,170.5 2200.5,175.5" fill="#d8d8d8" />
<text x="2182.5" y="217.6" font-size="17.5" fill="#eef0f2" >Utilities</text>
<polygon points="2248.5,207.0 2259.5,207.0 2254,213.0" fill="#d8d8d8" />
<polygon points="2259,96 2259,111 2262,108 2265,113 2267,112 2264,107 2268,107" fill="#fff" />
<rect x="2269" y="99" width="15" height="13" fill="#f2f2f2" />
<rect x="2272" y="102.5" width="1.8" height="1.5" fill="#3a8ee6" />
<rect x="2275" y="102.5" width="7" height="1.3" fill="#3a8ee6" />
<rect x="2272" y="105.5" width="1.8" height="1.5" fill="#3a8ee6" />
<rect x="2275" y="105.5" width="7" height="1.3" fill="#3a8ee6" />
<rect x="2272" y="108.5" width="1.8" height="1.5" fill="#3a8ee6" />
<rect x="2275" y="108.5" width="7" height="1.3" fill="#3a8ee6" />
<polygon points="2266,89 2270,89 2268,93 2272,93 2265,99 2267,94 2263,94" fill="#fcd27a" />
<rect x="2259" y="125.5" width="22" height="21" fill="none" stroke="#5ccd6a" stroke-width="1.2" stroke-dasharray="2,1.5"/>
<rect x="2262" y="130.5" width="12" height="12" fill="#5cb070" />
<rect x="2265" y="127.5" width="12" height="12" fill="#7cc890" />
<polygon points="2274,136 2274,149 2277,146 2280,150 2282,149 2279,145 2283,145" fill="#fff" />
<rect x="2262" y="161" width="17" height="24" fill="#d8d8d8" />
<rect x="2264" y="163.5" width="13" height="4" fill="#505560" />
<rect x="2264.0" y="170.0" width="3" height="3" fill="#505560" />
<rect x="2268.5" y="170.0" width="3" height="3" fill="#505560" />
<rect x="2273.0" y="170.0" width="3" height="3" fill="#505560" />
<rect x="2264.0" y="174.5" width="3" height="3" fill="#505560" />
<rect x="2268.5" y="174.5" width="3" height="3" fill="#505560" />
<rect x="2273.0" y="174.5" width="3" height="3" fill="#505560" />
<rect x="2264.0" y="179.0" width="3" height="3" fill="#505560" />
<rect x="2268.5" y="179.0" width="3" height="3" fill="#505560" />
<rect x="2273.0" y="179.0" width="3" height="3" fill="#505560" />
<rect x="2315" y="93" width="33" height="37" fill="#d9ac6c" />
<rect x="2323" y="88" width="17" height="6" fill="#f0f0f0" rx="1.5" />
<circle cx="2331.5" cy="88" r="2.5" fill="#f0f0f0" />
<path d="M2326,102 H2344 L2353,111 V136 H2326 Z" fill="#d8d8d8" />
<polygon points="2344,102 2344,111 2353,111" fill="#f4f4f4" />
<text x="2313.9" y="161" font-size="17.5" fill="#eef0f2" >Paste</text>
<polygon points="2328.5,170.5 2336.5,170.5 2332.5,175.5" fill="#d8d8d8" />
<text x="2322.5" y="217.6" font-size="17.5" fill="#eef0f2" >Clipboard</text>
<rect x="2379" y="89" width="19" height="21" fill="#d8d8d8" />
<line x1="2382" y1="93" x2="2394" y2="93" stroke="#777" stroke-width="1" />
<line x1="2382" y1="97" x2="2394" y2="97" stroke="#777" stroke-width="1" />
<line x1="2382" y1="101" x2="2394" y2="101" stroke="#777" stroke-width="1" />
<line x1="2389" y1="98" x2="2401" y2="110" stroke="#f4f4f4" stroke-width="1.3" />
<line x1="2401" y1="98" x2="2389" y2="110" stroke="#f4f4f4" stroke-width="1.3" />
<circle cx="2391" cy="110" r="2.5" fill="none" stroke="#f4f4f4" stroke-width="1.2" />
<circle cx="2399" cy="110" r="2.5" fill="none" stroke="#f4f4f4" stroke-width="1.2" />
<polygon points="2410.0,97.5 2418.0,97.5 2414,102.5" fill="#d8d8d8" />
<rect x="2382" y="125" width="13" height="19" fill="#c0c0c0" />
<path d="M2385,129 H2395 L2401,135 V149 H2385 Z" fill="#d8d8d8" />
<polygon points="2410.0,133.5 2418.0,133.5 2414,138.5" fill="#d8d8d8" />
<path d="M2453,93 H2474 V108 H2501 V129 H2453 Z" fill="#d8d8d8" />
<text x="2459.6" y="161" font-size="17.5" fill="#eef0f2" >Base</text>
<polygon points="2473.0,170.0 2481.0,170.0 2477,175.0" fill="#d8d8d8" />
<text x="2438.2" y="217.6" font-size="17.5" fill="#eef0f2" >View</text>
<polygon points="2483.5,207.0 2494.5,207.0 2489,213.0" fill="#d8d8d8" />
<path d="M2509,206 L2516,213 M2516,208 V213 H2511" fill="none" stroke="#d8d8d8" stroke-width="1.3" />
<g shape-rendering="crispEdges">
<line x1="1012" y1="566.6" x2="579" y2="1015.9" stroke="#00f6c6" stroke-width="1.1" />
<line x1="504" y1="707.4" x2="1073.9" y2="1059.6" stroke="#00f6c6" stroke-width="1.1" />
<polyline points="672.6,716.2 776.5,682.1 770.7,721 819.4,705.2 817.2,722 862.7,708.3 848.7,793.3 864.4,788.9 856.6,838.9 874.1,834.1 871.5,857.3 940.2,834.8 940.2,841.1 975.2,830.6 960.1,920.5 886,874.8 865.2,986.7 842.2,972.6 837.8,997.5 734.5,934.5 759.9,925.7 720.1,901.7 715.2,931 662.6,898.9 659.1,922.2" fill="none" stroke="#00f6c6" stroke-width="1.1" stroke-linejoin="miter"/>
<polyline points="656.2,923.1 574.3,874 585.6,869.7 574.3,862.7 662.1,834.7 661,844.4 677,841.2 658.4,828.8 664.8,826.1 643.8,813.1 717.2,789" fill="none" stroke="#00f6c6" stroke-width="1.1" stroke-linejoin="miter"/>
<path d="M717.2,789 Q734.9,773.75 769.8,799.5" fill="none" stroke="#00f6c6" stroke-width="1.1" />
<polyline points="769.8,799.5 780.3,766.2 788.2,725.9 798.7,734.6 811,696.1" fill="none" stroke="#00f6c6" stroke-width="1.1" stroke-linejoin="miter"/>
<path d="M811.5,696 C816,687.5 846,688.5 862.7,707.5 L864.5,719.7" fill="none" stroke="#00f6c6" stroke-width="1.1" />
<polyline points="672.6,716.2 711.5,740.4 693.6,746 754,784.6 769.8,799.5" fill="none" stroke="#00f6c6" stroke-width="1.1" stroke-linejoin="miter"/>
<polyline points="677.8,814.3 683.1,774.6 705.9,800.3" fill="none" stroke="#00f6c6" stroke-width="1.1" stroke-linejoin="miter"/>
<path d="M705.9,800.3 Q712,778 727.8,770.5 Q756.2,814.3 761.9,861.7" fill="none" stroke="#00f6c6" stroke-width="1.1" />
<polyline points="730.4,785.4 726.9,805.6 752.3,797.4 739.2,790.7" fill="none" stroke="#00f6c6" stroke-width="1.1" stroke-linejoin="miter"/>
<polyline points="730.4,785.4 720.8,790.7 717.2,817 704.1,851.2 681.3,847.6 670.5,920.4" fill="none" stroke="#00f6c6" stroke-width="1.1" stroke-linejoin="miter"/>
<polyline points="668.5,863.3 666.3,875.6 679,871 668.5,863.3" fill="none" stroke="#00f6c6" stroke-width="1.1" stroke-linejoin="miter"/>
<polyline points="770.7,808.2 768.9,818.7 782.1,815.2 770.7,808.2" fill="none" stroke="#00f6c6" stroke-width="1.1" stroke-linejoin="miter"/>
<polyline points="765.4,834.5 762.8,861.7 786.5,852 766.3,839.8" fill="none" stroke="#00f6c6" stroke-width="1.1" stroke-linejoin="miter"/>
<polyline points="765.4,862.2 784.7,848.5 795.2,845 811.9,846.8 798.6,865.2 839.6,890.5 840.9,883.6 846,894.1 863,905.2 863,908.9 870.4,906.7 874.9,919.3 880.8,940" fill="none" stroke="#00f6c6" stroke-width="1.1" stroke-linejoin="miter"/>
<polyline points="868.9,861.8 874.2,864.5 868.5,868.6 868.9,861.8" fill="none" stroke="#00f6c6" stroke-width="1.1" stroke-linejoin="miter"/>
<polyline points="793.3,888.5 788.2,916.3 822.2,905.2 793.3,888.5" fill="none" stroke="#00f6c6" stroke-width="1.1" stroke-linejoin="miter"/>
<polyline points="885.9,875.6 881.2,900" fill="none" stroke="#00f6c6" stroke-width="1.1" stroke-linejoin="miter"/>
<polygon points="653.9,914.3 665.3,926.6 655.6,937.1" fill="#1d5e52" stroke="#f0f0f0" stroke-width="1.1"/>
<rect x="725.5" y="870" width="2.2" height="2.2" fill="#00f6c6" />
</g>
<defs><linearGradient id="gz" x1="0" y1="0" x2="1" y2="0"><stop offset="0" stop-color="#2b4775"/><stop offset="0.5" stop-color="#4a6aa5"/><stop offset="1" stop-color="#2b4775"/></linearGradient><linearGradient id="gcube" x1="0" y1="0" x2="0" y2="1"><stop offset="0" stop-color="#c2c4c8"/><stop offset="1" stop-color="#9a9da2"/></linearGradient><radialGradient id="gshadow" cx="0.5" cy="0.5" r="0.5"><stop offset="0" stop-color="#10141a" stop-opacity="0.7"/><stop offset="1" stop-color="#10141a" stop-opacity="0"/></radialGradient></defs>
<line x1="581.5" y1="853" x2="617" y2="813" stroke="#4a9848" stroke-width="9" stroke-linecap="round"/>
<line x1="584" y1="854" x2="618" y2="816" stroke="#70b070" stroke-width="1.5" />
<line x1="587" y1="818" x2="613" y2="816" stroke="none" stroke-width="1" />
<line x1="579" y1="861" x2="629" y2="890" stroke="#b06464" stroke-width="9" stroke-linecap="round"/>
<line x1="581" y1="859" x2="629" y2="887" stroke="#d89a96" stroke-width="2" />
<rect x="570" y="810" width="9" height="50" fill="url(#gz)" rx="4" />
<circle cx="574.5" cy="812" r="4.3" fill="#5a82c0" />
<polyline points="572.1,787.3 590.8,787.3 572.1,805.6 590.1,805.6" fill="none" stroke="#1e6ef0" stroke-width="1.5" />
<line x1="615" y1="784" x2="624.4" y2="793.2" stroke="#2a9a2a" stroke-width="1.3" />
<line x1="632.5" y1="785.1" x2="624.4" y2="793.2" stroke="#2a9a2a" stroke-width="1.3" />
<line x1="624.4" y1="793.2" x2="624.4" y2="801.8" stroke="#2a9a2a" stroke-width="1.3" />
<line x1="627.8" y1="867" x2="646" y2="884.8" stroke="#d02020" stroke-width="1.2" />
<line x1="646" y1="868.1" x2="627.8" y2="885.9" stroke="#d02020" stroke-width="1.2" />
<line x1="2310.5" y1="623" x2="2310.5" y2="708" stroke="#7272ff" stroke-width="1.3" />
<line x1="2281.8" y1="710" x2="2368.8" y2="620.2" stroke="#62d862" stroke-width="1.3" />
<line x1="2274.2" y1="656.8" x2="2386" y2="726.7" stroke="#e86a6a" stroke-width="1.3" />
<rect x="2306.5" y="675.5" width="8" height="8" fill="#212830" stroke="#f4f4f4" stroke-width="1.3"/>
<path fill-rule="evenodd" fill="#474e58" d="M2336,461 A93,76 0 1 0 2522,461 A93,76 0 1 0 2336,461 Z M2356,461 A73,54 0 1 0 2502,461 A73,54 0 1 0 2356,461 Z"/>
<ellipse cx="2430" cy="468" rx="52" ry="40" fill="url(#gshadow)"/>
<text x="0" y="0" font-size="27" fill="#9a9ea4" font-weight="bold" text-anchor="middle" transform="translate(2367,418) rotate(-58)">W</text>
<text x="0" y="0" font-size="27" fill="#9a9ea4" font-weight="bold" text-anchor="middle" transform="translate(2505,509) rotate(-35)">E</text>
<text x="0" y="0" font-size="27" fill="#9a9ea4" font-weight="bold" text-anchor="middle" transform="translate(2375,523) rotate(38)">S</text>
<text x="0" y="0" font-size="27" fill="#9a9ea4" font-weight="bold" text-anchor="middle" transform="translate(2472,404) rotate(55)">N</text>
<polygon points="2422.1,365.9 2481.4,399.6 2435.8,445.1 2375.7,410.1" fill="#b9bbbf" />
<polygon points="2375.7,410.1 2435.8,445.1 2434.9,488.6 2380.6,452.1" fill="url(#gcube)" />
<polygon points="2435.8,445.1 2481.4,399.6 2476.1,443.4 2434.9,488.6" fill="url(#gcube)" />
<polygon points="2425,436 2435,431 2445,438 2436,447 2436,455 2426,449" fill="#a3a8b2" opacity="0.8"/>
<line x1="2375.7" y1="410.1" x2="2435.8" y2="445.1" stroke="#6a707a" stroke-width="0.8" stroke-dasharray="5,3"/>
<line x1="2435.8" y1="445.1" x2="2481.4" y2="399.6" stroke="#6a707a" stroke-width="0.8" stroke-dasharray="5,3"/>
<line x1="2435.8" y1="445.1" x2="2434.9" y2="488.6" stroke="#6a707a" stroke-width="0.8" stroke-dasharray="5,3"/>
<g transform="matrix(0.5930,0.3370,-0.4640,0.4420,2422.1,365.9)"><text x="50" y="62" font-size="29" font-weight="bold" fill="#5a626e" text-anchor="middle">TOP</text></g>
<g transform="matrix(0.6010,0.3500,0.0490,0.4200,2375.7,410.1)"><text x="50" y="64" font-size="23" font-weight="bold" fill="#5a626e" text-anchor="middle">FRONT</text></g>
<g transform="matrix(0.4560,-0.4550,-0.0090,0.4350,2435.8,445.1)"><text x="50" y="64" font-size="24" font-weight="bold" fill="#5a626e" text-anchor="middle">RIGHT</text></g>
<rect x="2395.5" y="558.5" width="68" height="24" fill="#9ea2ac" rx="5" stroke="#868a94" stroke-width="1"/>
<text x="2401.5" y="576" font-size="16" fill="#5c6470" >WCS</text>
<polygon points="2446,566 2455,566 2450.5,572" fill="none" stroke="#c8ccd4" stroke-width="1"/>
<rect x="2503" y="616" width="46" height="311" fill="#5c6168" rx="4" />
<circle cx="2539.5" cy="623" r="4.5" fill="#52575e" stroke="#484d54" stroke-width="1" />
<line x1="2537" y1="620.5" x2="2542" y2="625.5" stroke="#484d54" stroke-width="1" />
<line x1="2542" y1="620.5" x2="2537" y2="625.5" stroke="#484d54" stroke-width="1" />
<path d="M2525,641 A16,16 0 1 0 2541,657 V646 A5,5 0 0 0 2536,641 Z" fill="none" stroke="#484d54" stroke-width="2" />
<circle cx="2525" cy="655" r="7" fill="none" stroke="#484d54" stroke-width="2.5" />
<line x1="2513" y1="663" x2="2519" y2="669" stroke="#484d54" stroke-width="2" />
<line x1="2537" y1="663" x2="2531" y2="669" stroke="#484d54" stroke-width="2" />
<polygon points="2522.0,684.5 2530.0,684.5 2526,689.5" fill="#484d54" />
<line x1="2505" y1="697.5" x2="2547" y2="697.5" stroke="#52575e" stroke-width="1" />
<path d="M2512,726 C2508,716 2513,712 2516,720 V706 C2516,702 2520,702 2520,706 V716 V703 C2520,699 2524,699 2524,703 V716 V704 C2524,700 2528,700 2528,704 V717 V708 C2528,704 2532,704 2532,708 V722 C2532,732 2526,737 2520,737 C2515,737 2513,732 2512,726 Z" fill="none" stroke="#484d54" stroke-width="2" />
<line x1="2509" y1="747" x2="2530" y2="768" stroke="#484d54" stroke-width="2.2" />
<line x1="2531" y1="746" x2="2509" y2="769" stroke="#484d54" stroke-width="2.2" />
<circle cx="2534" cy="770" r="7" fill="none" stroke="#484d54" stroke-width="2.5" />
<line x1="2539" y1="775" x2="2543" y2="780" stroke="#484d54" stroke-width="3" />
<polygon points="2522.0,789.5 2530.0,789.5 2526,794.5" fill="#484d54" />
<ellipse cx="2525" cy="823" rx="17" ry="6" fill="none" stroke="#484d54" stroke-width="2"/>
<path d="M2521,836 V812 H2516 L2525,803 L2534,812 H2529 V836 Z" fill="#5c6168" stroke="#484d54" stroke-width="2" />
<polygon points="2522.0,846.5 2530.0,846.5 2526,851.5" fill="#484d54" />
<line x1="2505" y1="858.5" x2="2547" y2="858.5" stroke="#52575e" stroke-width="1" />
<rect x="2508.5" y="866.5" width="8" height="8" fill="none" stroke="#484d54" stroke-width="1.8"/>
<rect x="2520.5" y="866.5" width="8" height="8" fill="none" stroke="#484d54" stroke-width="1.8"/>
<rect x="2532.5" y="866.5" width="8" height="8" fill="none" stroke="#484d54" stroke-width="1.8"/>
<rect x="2508.5" y="879.5" width="24" height="20" fill="none" stroke="#484d54" stroke-width="1.8"/>
<polygon points="2516,884 2516,895 2525,889.5" fill="#484d54" />
<circle cx="2539.5" cy="917" r="4.5" fill="#52575e" stroke="#484d54" stroke-width="1" />
<line x1="2537" y1="917" x2="2542" y2="917" stroke="#484d54" stroke-width="1.2" />
<rect x="568" y="1285" width="40" height="188" fill="#272d38" rx="5" />
<rect x="574.0" y="1292.8" width="2" height="2" fill="#c0c4ca" />
<rect x="579.2" y="1292.8" width="2" height="2" fill="#c0c4ca" />
<rect x="584.4" y="1292.8" width="2" height="2" fill="#c0c4ca" />
<rect x="589.6" y="1292.8" width="2" height="2" fill="#c0c4ca" />
<rect x="594.8" y="1292.8" width="2" height="2" fill="#c0c4ca" />
<rect x="600.0" y="1292.8" width="2" height="2" fill="#c0c4ca" />
<line x1="580" y1="1314" x2="592" y2="1326" stroke="#c4c8ce" stroke-width="2.4" />
<line x1="592" y1="1314" x2="580" y2="1326" stroke="#c4c8ce" stroke-width="2.4" />
<path d="M576.5,1365.5 L589,1353" fill="none" stroke="#9a9ea4" stroke-width="3.8" stroke-linecap="round"/>
<path d="M586,1352 A6.5,6.5 0 1 0 595.5,1356 L591,1356 L588.5,1352.5 L591,1349 L595,1347 A6.5,6.5 0 0 0 586,1352 Z" fill="#9a9ea4" />
<rect x="605" y="1286" width="1418" height="155" fill="#98999b" rx="2" />
<rect x="605" y="1441" width="1418" height="2" fill="#171c24" />
<rect x="605" y="1443" width="1418" height="29" fill="#c0c1c3" rx="2" />
<text x="609.5" y="1318" font-size="17.8" fill="#0a0a0a" style="font-family:&quot;Liberation Mono&quot;" >Command:</text>
<text x="609.5" y="1341" font-size="17.8" fill="#0a0a0a" style="font-family:&quot;Liberation Mono&quot;" >Command:</text>
<text x="609.5" y="1364" font-size="17.8" fill="#0a0a0a" style="font-family:&quot;Liberation Mono&quot;" >EXPLODE</text>
<text x="609.5" y="1387" font-size="17.8" fill="#0a0a0a" style="font-family:&quot;Liberation Mono&quot;" >1 found</text>
<text x="609.5" y="1410" font-size="17.8" fill="#0a0a0a" style="font-family:&quot;Liberation Mono&quot;" >Command:</text>
<text x="609.5" y="1433" font-size="17.8" fill="#0a0a0a" style="font-family:&quot;Liberation Mono&quot;" >Command:</text>
<rect x="612.5" y="1450" width="23" height="17" fill="none" stroke="#555" stroke-width="1.3"/>
<rect x="612.5" y="1450" width="23" height="3" fill="#555" />
<path d="M614.5,1456 L618,1458.5 L614.5,1461 M619,1462.5 H623" fill="none" stroke="#555" stroke-width="1" />
<polygon points="640.5,1455.5 650.5,1455.5 645.5,1461.5" fill="#555" />
<text x="661.8" y="1463.6" font-size="17.8" fill="#5a5a5a" font-style="italic" style="font-family:&quot;Liberation Mono&quot;" >Type a command</text>
<polygon points="2006,1459.5 2017,1459.5 2011.5,1454" fill="#505050" />
<rect x="1684" y="1484" width="72" height="36" fill="#3b4453" />
<rect x="1762" y="1484" width="96" height="36" fill="#3b4453" />
<rect x="1864" y="1484" width="36" height="36" fill="#3b4453" />
<rect x="1903" y="1484" width="34" height="36" fill="#5b8ec4" />
<rect x="1937" y="1484" width="121" height="36" fill="#3b4453" />
<rect x="2061" y="1484" width="34" height="36" fill="#5b8ec4" />
<rect x="2097" y="1484" width="34" height="36" fill="#5b8ec4" />
<rect x="2131" y="1484" width="25" height="36" fill="#3b4453" />
<rect x="2163" y="1484" width="34" height="36" fill="#5b8ec4" />
<rect x="2197" y="1484" width="123" height="36" fill="#3b4453" />
<rect x="2326" y="1484" width="60" height="36" fill="#3b4453" />
<rect x="2388" y="1484" width="36" height="36" fill="#3b4453" />
<rect x="2430" y="1484" width="36" height="36" fill="#3b4453" />
<rect x="2470" y="1484" width="4" height="36" fill="#3b4453" />
<rect x="2478" y="1484" width="72" height="36" fill="#3b4453" />
<text x="1690" y="1509.5" font-size="17.5" fill="#f4f4f4" >MODEL</text>
<line x1="1768" y1="1491.0" x2="1791" y2="1491.0" stroke="#dcdcdc" stroke-width="1.3" />
<line x1="1769.5" y1="1490" x2="1769.5" y2="1513" stroke="#dcdcdc" stroke-width="1.3" />
<line x1="1768" y1="1497.8" x2="1791" y2="1497.8" stroke="#dcdcdc" stroke-width="1.3" />
<line x1="1776.0" y1="1490" x2="1776.0" y2="1513" stroke="#dcdcdc" stroke-width="1.3" />
<line x1="1768" y1="1504.6" x2="1791" y2="1504.6" stroke="#dcdcdc" stroke-width="1.3" />
<line x1="1782.5" y1="1490" x2="1782.5" y2="1513" stroke="#dcdcdc" stroke-width="1.3" />
<line x1="1768" y1="1511.4" x2="1791" y2="1511.4" stroke="#dcdcdc" stroke-width="1.3" />
<line x1="1789.0" y1="1490" x2="1789.0" y2="1513" stroke="#dcdcdc" stroke-width="1.3" />
<rect x="1807" y="1493" width="3" height="3" fill="#dcdcdc" />
<rect x="1814" y="1493" width="3" height="3" fill="#dcdcdc" />
<rect x="1821" y="1493" width="3" height="3" fill="#dcdcdc" />
<rect x="1807" y="1500" width="3" height="3" fill="#dcdcdc" />
<rect x="1814" y="1500" width="3" height="3" fill="#dcdcdc" />
<rect x="1821" y="1500" width="3" height="3" fill="#dcdcdc" />
<rect x="1807" y="1507" width="3" height="3" fill="#dcdcdc" />
<rect x="1814" y="1507" width="3" height="3" fill="#dcdcdc" />
<rect x="1821" y="1507" width="3" height="3" fill="#dcdcdc" />
<polygon points="1840.0,1498.5 1852.0,1498.5 1846,1505.5" fill="#dcdcdc" />
<line x1="1870" y1="1496" x2="1882" y2="1496" stroke="#dcdcdc" stroke-width="1.3" />
<line x1="1876" y1="1490" x2="1876" y2="1502" stroke="#dcdcdc" stroke-width="1.3" />
<rect x="1879.5" y="1505.5" width="14" height="5" fill="#dcdcdc" stroke="#dcdcdc" stroke-width="1"/>
<rect x="1880.5" y="1506" width="2" height="4" fill="#3b4453" />
<path d="M1908,1491 V1513.5 H1932" fill="none" stroke="#f0f0f0" stroke-width="1.4" />
<path d="M1908,1506 H1915 V1513" fill="none" stroke="#f0f0f0" stroke-width="1.3" />
<circle cx="1954" cy="1502.5" r="10" fill="none" stroke="#dcdcdc" stroke-width="1.3" />
<line x1="1953" y1="1502.5" x2="1968" y2="1502.5" stroke="#dcdcdc" stroke-width="1.3" />
<line x1="1953" y1="1502.5" x2="1963" y2="1492" stroke="#dcdcdc" stroke-width="1.3" />
<polygon points="1980.0,1498.5 1992.0,1498.5 1986,1505.5" fill="#dcdcdc" />
<line x1="2006" y1="1490" x2="2025" y2="1509" stroke="#e05a5a" stroke-width="1.3" />
<line x1="2016.5" y1="1490" x2="2016.5" y2="1513" stroke="#5ccd6a" stroke-width="1.3" />
<rect x="2013.5" y="1499.5" width="6" height="6" fill="none" stroke="#e8e8e8" stroke-width="1.2"/>
<polygon points="2040.0,1498.5 2052.0,1498.5 2046,1505.5" fill="#dcdcdc" />
<path d="M2066,1510.5 L2083,1493 M2066,1510.5 H2090" fill="none" stroke="#f0f0f0" stroke-width="1.4" />
<rect x="2075" y="1499" width="5" height="5" fill="#f0f0f0" />
<rect x="2098" y="1490.5" width="6" height="6" fill="none" stroke="#f0f0f0" stroke-width="1.3"/>
<path d="M2104,1493.5 H2126 V1513.5 H2101 V1496" fill="none" stroke="#f0f0f0" stroke-width="1.3" />
<polygon points="2138.0,1498.5 2150.0,1498.5 2144,1505.5" fill="#dcdcdc" />
<polygon points="2180,1490 2191,1513 2180,1506 2169,1513" fill="#ffffff" />
<circle cx="2188" cy="1494.5" r="3.5" fill="none" stroke="#ffffff" stroke-width="1.3" />
<polygon points="2215.5,1490 2226.5,1513 2215.5,1506 2204.5,1513" fill="#dcdcdc" />
<polygon points="2222,1489 2226,1489 2223,1494 2226,1494 2220,1501 2221.5,1495.5 2218.5,1495.5" fill="#dcdcdc" />
<polygon points="2252,1490 2263,1513 2252,1506 2241,1513" fill="#dcdcdc" />
<text x="2278" y="1509.5" font-size="17.5" fill="#f4f4f4" textLength="18" lengthAdjust="spacingAndGlyphs">1:1</text>
<polygon points="2302.0,1498.5 2314.0,1498.5 2308,1505.5" fill="#dcdcdc" />
<g transform="translate(2344,1502)"><circle r="9" fill="#dcdcdc"/><rect x="-2.5" y="-12.5" width="5" height="6" fill="#dcdcdc" transform="rotate(0)"/><rect x="-2.5" y="-12.5" width="5" height="6" fill="#dcdcdc" transform="rotate(45)"/><rect x="-2.5" y="-12.5" width="5" height="6" fill="#dcdcdc" transform="rotate(90)"/><rect x="-2.5" y="-12.5" width="5" height="6" fill="#dcdcdc" transform="rotate(135)"/><rect x="-2.5" y="-12.5" width="5" height="6" fill="#dcdcdc" transform="rotate(180)"/><rect x="-2.5" y="-12.5" width="5" height="6" fill="#dcdcdc" transform="rotate(225)"/><rect x="-2.5" y="-12.5" width="5" height="6" fill="#dcdcdc" transform="rotate(270)"/><rect x="-2.5" y="-12.5" width="5" height="6" fill="#dcdcdc" transform="rotate(315)"/><circle r="4" fill="#3b4453"/></g>
<polygon points="2368.0,1498.5 2380.0,1498.5 2374,1505.5" fill="#dcdcdc" />
<rect x="2394" y="1500.5" width="23" height="3" fill="#dcdcdc" />
<rect x="2404.5" y="1490" width="3" height="23" fill="#dcdcdc" />
<rect x="2436.5" y="1490.5" width="8.5" height="8.5" fill="none" stroke="#dcdcdc" stroke-width="1.3"/>
<circle cx="2454" cy="1500.5" r="5" fill="none" stroke="#dcdcdc" stroke-width="1.3" />
<polygon points="2445,1504 2451,1513 2439,1513" fill="none" stroke="#dcdcdc" stroke-width="1.3"/>
<rect x="2484" y="1493.5" width="24" height="17" fill="none" stroke="#dcdcdc" stroke-width="1.4"/>
<line x1="2489" y1="1507" x2="2495" y2="1501" stroke="#dcdcdc" stroke-width="1.3" />
<line x1="2497" y1="1503" x2="2503" y2="1497" stroke="#dcdcdc" stroke-width="1.3" />
<polygon points="2488,1508 2488,1503 2493,1508" fill="#dcdcdc" />
<polygon points="2504,1496 2499,1496 2504,1501" fill="#dcdcdc" />
<rect x="2520" y="1491.9" width="24.5" height="2.6" fill="#dcdcdc" />
<rect x="2520" y="1500.4" width="24.5" height="2.6" fill="#dcdcdc" />
<rect x="2520" y="1509.2" width="24.5" height="2.6" fill="#dcdcdc" />
</svg>
</body></html>
